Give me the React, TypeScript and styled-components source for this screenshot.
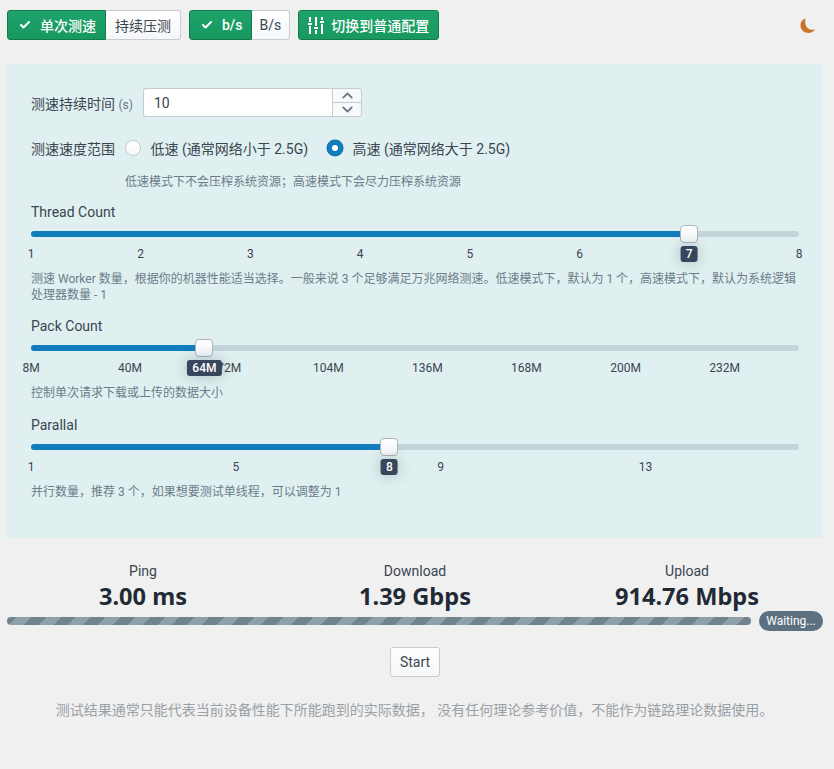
import React from 'react';
import styled, { createGlobalStyle } from 'styled-components';
import { Check, ChevronUp, ChevronDown } from 'lucide-react';

const GlobalStyle = createGlobalStyle`
  html, body {
    margin: 0;
    padding: 0;
    background: #f0f0f0;
  }
  body {
    font-family: Roboto, 'Noto Sans CJK SC', sans-serif;
    font-size: 14px;
    color: #212b36;
  }
  * {
    box-sizing: border-box;
  }
`;

type SliderProps = {
  marks: { label: string; at: number }[];
  value: number;
  text: string;
};

function Slider({ marks, value, text }: SliderProps) {
  return (
    <SliderBox>
      <Track>
        <Fill style={{ width: `${value}%` }} />
        <Thumb style={{ left: `${value}%` }} />
        <ValueBadge style={{ left: `${value}%` }}>{text}</ValueBadge>
      </Track>
      <Marks>
        {marks.map(m => (
          <Mark key={m.label} style={{ left: `${m.at}%` }}>
            {m.label}
          </Mark>
        ))}
      </Marks>
    </SliderBox>
  );
}

function SlidersIcon() {
  return (
    <svg width="16" height="17" viewBox="0 0 16 17" fill="#fff">
      <rect x="1" y="0" width="2" height="5" />
      <rect x="0" y="6" width="4" height="2" />
      <rect x="1" y="9" width="2" height="8" />
      <rect x="7" y="0" width="2" height="9" />
      <rect x="6" y="10" width="4" height="2" />
      <rect x="7" y="13" width="2" height="4" />
      <rect x="13" y="0" width="2" height="3" />
      <rect x="12" y="4" width="4" height="2" />
      <rect x="13" y="7" width="2" height="10" />
    </svg>
  );
}

function MoonIcon() {
  return (
    <svg width="16" height="16" viewBox="0 0 16 16">
      <path
        d="M5.4 0.300C1.700 1.800 0 5.200.6 8.800c.8 3.900 4.400 6.600 8.400 6.200 2.700-.3 4.800-1.600 6-3.700-1.400.6-3.400.8-5.200.1C6.400 10.200 4.400 6.200 5.400.3z"
        fill="#c8742a"
      />
    </svg>
  );
}

const threadMarks = [1, 2, 3, 4, 5, 6, 7, 8]
  .filter(n => n !== 7)
  .map(n => ({ label: String(n), at: ((n - 1) / 7) * 100 }));

const packMarks = [8, 40, 72, 104, 136, 168, 200, 232].map(n => ({
  label: `${n}M`,
  at: ((n - 8) / 248) * 100,
}));

const parallelMarks = [1, 5, 9, 13].map(n => ({
  label: String(n),
  at: ((n - 1) / 15) * 100,
}));

export default function App() {
  return (
    <>
      <GlobalStyle />
      <Page>
        <Toolbar>
          <BtnGroup>
            <GroupBtn active>
              <Check size={12} strokeWidth={4} />
              单次测速
            </GroupBtn>
            <GroupBtn>持续压测</GroupBtn>
          </BtnGroup>
          <BtnGroup>
            <GroupBtn active compact>
              <Check size={12} strokeWidth={4} />
              b/s
            </GroupBtn>
            <GroupBtn compact>B/s</GroupBtn>
          </BtnGroup>
          <PrimaryBtn>
            <SlidersIcon />
            切换到普通配置
          </PrimaryBtn>
          <ThemeToggle>
            <MoonIcon />
          </ThemeToggle>
        </Toolbar>

        <Panel>
          <FieldRow>
            <FieldLabel>
              测速持续时间 <Unit>(s)</Unit>
            </FieldLabel>
            <NumberInput>
              <InputValue>10</InputValue>
              <Spinners>
                <SpinBtn>
                  <ChevronUp size={17} strokeWidth={2.5} />
                </SpinBtn>
                <SpinBtn>
                  <ChevronDown size={17} strokeWidth={2.5} />
                </SpinBtn>
              </Spinners>
            </NumberInput>
          </FieldRow>

          <RadioRow>
            <FieldLabel>测速速度范围</FieldLabel>
            <RadioItem>
              <Radio />
              低速 (通常网络小于 2.5G)
            </RadioItem>
            <RadioItem>
              <Radio checked />
              高速 (通常网络大于 2.5G)
            </RadioItem>
          </RadioRow>
          <RadioHelp>低速模式下不会压榨系统资源；高速模式下会尽力压榨系统资源</RadioHelp>

          <SliderField>
            <SliderLabel>Thread Count</SliderLabel>
            <Slider marks={threadMarks} value={(6 / 7) * 100} text="7" />
            <Help>
              测速 Worker 数量，根据你的机器性能适当选择。一般来说 3 个足够满足万兆网络测速。低速模式下，默认为 1 个，高速模式下，默认为系统逻辑处理器数量 - 1
            </Help>
          </SliderField>

          <SliderField>
            <SliderLabel>Pack Count</SliderLabel>
            <Slider marks={packMarks} value={(56 / 248) * 100} text="64M" />
            <Help>控制单次请求下载或上传的数据大小</Help>
          </SliderField>

          <SliderField spaced>
            <SliderLabel>Parallal</SliderLabel>
            <Slider marks={parallelMarks} value={(7 / 15) * 100} text="8" />
            <Help>并行数量，推荐 3 个，如果想要测试单线程，可以调整为 1</Help>
          </SliderField>
        </Panel>

        <Stats>
          <Stat>
            <StatLabel>Ping</StatLabel>
            <StatValue>3.00 ms</StatValue>
          </Stat>
          <Stat>
            <StatLabel>Download</StatLabel>
            <StatValue>1.39 Gbps</StatValue>
          </Stat>
          <Stat>
            <StatLabel>Upload</StatLabel>
            <StatValue>914.76 Mbps</StatValue>
          </Stat>
        </Stats>

        <ProgressRow>
          <Progress />
          <StatusPill>Waiting...</StatusPill>
        </ProgressRow>

        <StartRow>
          <StartBtn>Start</StartBtn>
        </StartRow>

        <Footnote>
          测试结果通常只能代表当前设备性能下所能跑到的实际数据， 没有任何理论参考价值，不能作为链路理论数据使用。
        </Footnote>
      </Page>
    </>
  );
}

const Page = styled.div`
  padding: 10px 11px 0 7px;
`;

const Toolbar = styled.div`
  display: flex;
  align-items: center;
  gap: 8px;
  height: 30px;
`;

const BtnGroup = styled.div`
  display: flex;
`;

const GroupBtn = styled.button<{ active?: boolean; compact?: boolean }>`
  display: flex;
  align-items: center;
  gap: 9px;
  height: 30px;
  padding: 0 ${props => (props.compact ? '8px' : '9px')} 0
    ${props => (props.active ? '11px' : props.compact ? '8px' : '9px')};
  font: inherit;
  font-weight: ${props => (props.active ? 500 : 400)};
  color: ${props => (props.active ? '#fff' : '#3a4550')};
  background: ${props => (props.active ? 'linear-gradient(#1fa36c, #17985f)' : 'linear-gradient(#fff, #f6f7f8)')};
  border: 1px solid ${props => (props.active ? '#137a4c' : '#c6ccd2')};
  &:first-child {
    border-radius: 3px 0 0 3px;
    border-right-width: ${props => (props.active ? '1px' : '0')};
  }
  &:last-child {
    border-radius: 0 3px 3px 0;
    border-left-width: 0;
  }
`;

const PrimaryBtn = styled.button`
  display: flex;
  align-items: center;
  gap: 7px;
  height: 30px;
  padding: 0 9px;
  font: inherit;
  font-weight: 500;
  color: #fff;
  background: linear-gradient(#1fa36c, #17985f);
  border: 1px solid #137a4c;
  border-radius: 3px;
`;

const ThemeToggle = styled.div`
  display: flex;
  margin-left: auto;
  margin-right: 7px;
  margin-top: 2px;
`;

const Panel = styled.div`
  margin-top: 24px;
  height: 474px;
  padding: 24px 24px 0;
  background: #e0f0f0;
`;

const FieldRow = styled.div`
  display: flex;
  align-items: center;
  height: 29px;
`;

const FieldLabel = styled.div`
  width: 112px;
  flex-shrink: 0;
  color: #3a4550;
`;

const Unit = styled.span`
  color: #6b7885;
  font-size: 12px;
`;

const NumberInput = styled.div`
  display: flex;
  width: 219px;
  height: 29px;
`;

const InputValue = styled.div`
  flex: 1;
  display: flex;
  align-items: center;
  padding-left: 10px;
  color: #3a4550;
  background: #fff;
  border: 1px solid #c6ccd2;
  border-right: 0;
  border-radius: 3px 0 0 3px;
`;

const Spinners = styled.div`
  display: flex;
  flex-direction: column;
  width: 30px;
  border: 1px solid #c6ccd2;
  border-radius: 0 3px 3px 0;
  background: #f8f9fa;
`;

const SpinBtn = styled.div`
  flex: 1;
  min-height: 0;
  overflow: hidden;
  display: flex;
  align-items: center;
  justify-content: center;
  color: #66768a;
  &:first-child {
    border-bottom: 1px solid #c6ccd2;
  }
`;

const RadioRow = styled.div`
  display: flex;
  align-items: center;
  margin-top: 20px;
  height: 22px;
`;

const RadioItem = styled.div`
  display: flex;
  align-items: center;
  gap: 9.5px;
  margin-left: -18px;
  margin-right: 37px;
  color: #3a4550;
`;

const Radio = styled.span<{ checked?: boolean }>`
  width: 16px;
  height: 16px;
  border-radius: 50%;
  background: ${props => (props.checked ? '#fff' : 'linear-gradient(#fff, #f6f7f8)')};
  border: ${props => (props.checked ? '5px solid #127dbd' : '1px solid #c6ccd2')};
  box-shadow: ${props => (props.checked ? '0 0 0 0.5px #0f6aa0' : 'none')};
`;

const RadioHelp = styled.div`
  margin: 17px 0 0 94px;
  font-size: 12px;
  line-height: 13px;
  color: #6b7c8a;
`;

const SliderField = styled.div<{ spaced?: boolean }>`
  margin-top: ${props => (props.spaced ? '14px' : '13px')};
`;

const SliderLabel = styled.div`
  padding-top: 1px;
  color: #3a4550;
  line-height: 18px;
`;

const SliderBox = styled.div`
  padding-top: 10px;
`;

const Track = styled.div`
  position: relative;
  height: 6px;
  border-radius: 3px;
  background: #c4d4d9;
`;

const Fill = styled.div`
  height: 6px;
  border-radius: 3px 0 0 3px;
  background: #127dbd;
`;

const Thumb = styled.div`
  position: absolute;
  top: -6px;
  width: 18px;
  height: 18px;
  margin-left: -9px;
  border-radius: 4px;
  background: linear-gradient(#fff, #f3f5f7);
  border: 1px solid #a9b3bc;
  z-index: 2;
`;

const ValueBadge = styled.div`
  position: absolute;
  top: 15px;
  transform: translateX(-50%);
  height: 16px;
  padding: 0 5px;
  display: flex;
  align-items: center;
  font-size: 12px;
  font-weight: 500;
  color: #fff;
  background: #37465a;
  border-radius: 3px;
  box-shadow: 0 0 14px rgba(40, 60, 80, 0.3);
  z-index: 2;
`;

const Marks = styled.div`
  position: relative;
  height: 18px;
  margin-top: 8px;
`;

const Mark = styled.span`
  position: absolute;
  transform: translateX(-50%);
  font-size: 12px;
  line-height: 18px;
  color: #3a4550;
`;

const Help = styled.div`
  margin-top: 8px;
  font-size: 12px;
  line-height: 16px;
  color: #6b7c8a;
`;

const Stats = styled.div`
  display: grid;
  grid-template-columns: repeat(3, 1fr);
  margin-top: 23px;
`;

const Stat = styled.div`
  text-align: center;
`;

const StatLabel = styled.div`
  line-height: 20px;
  color: #3a4550;
`;

const StatValue = styled.div`
  font-family: 'Noto Sans', sans-serif;
  font-size: 23.6px;
  font-weight: 700;
  line-height: 30px;
  color: #1f2a35;
`;

const ProgressRow = styled.div`
  display: flex;
  align-items: center;
  gap: 8px;
  height: 20px;
`;

const Progress = styled.div`
  flex: 1;
  height: 8px;
  border-radius: 4px;
  background: repeating-linear-gradient(
    -45deg,
    #71838f 0 10.5px,
    #90a0ab 10.5px 21px
  );
`;

const StatusPill = styled.div`
  display: flex;
  align-items: center;
  justify-content: center;
  width: 64px;
  height: 20px;
  border-radius: 10px;
  background: #5d7082;
  color: #fff;
  font-size: 12px;
`;

const StartRow = styled.div`
  display: flex;
  justify-content: center;
  margin-top: 16px;
`;

const StartBtn = styled.button`
  width: 50px;
  height: 30px;
  font: inherit;
  color: #3a4550;
  background: linear-gradient(#fff, #f6f7f8);
  border: 1px solid #c6ccd2;
  border-radius: 3px;
`;

const Footnote = styled.div`
  margin-top: 22px;
  padding-right: 1px;
  text-align: center;
  color: #9aa1a6;
`;
